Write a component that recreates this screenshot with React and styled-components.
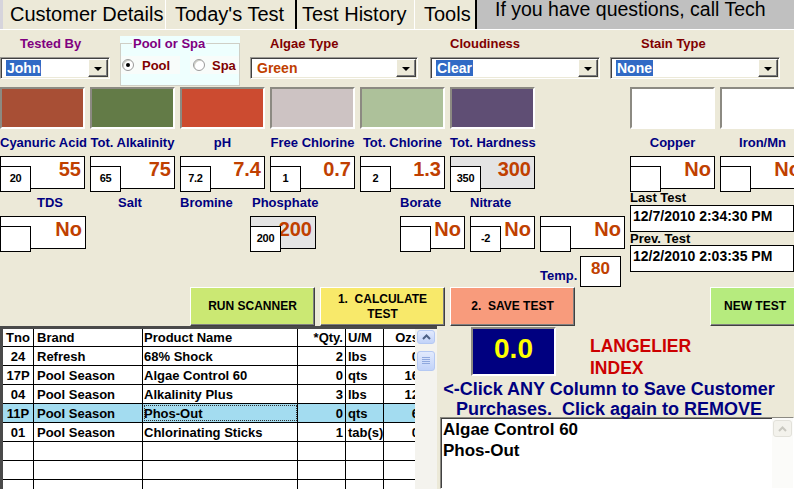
import React from "react";
import styled, { createGlobalStyle } from "styled-components";

const GlobalStyle = createGlobalStyle`
  html, body {
    margin: 0;
    padding: 0;
    background: #ece9d8;
  }
  body {
    font-family: "Liberation Sans", Arial, sans-serif;
  }
`;

const Screen = styled.div`
  width: 794px;
  height: 489px;
  overflow: hidden;
  background: #ece9d8;
  font-family: "Liberation Sans", Arial, sans-serif;
  color: #000;
`;

/* ---------- tabs ---------- */
const TabBar = styled.div`
  display: flex;
  height: 30px;
  box-sizing: border-box;
  border-bottom: 1px solid #fff;
  padding-left: 3px;
  background: #d6d4dc;
`;
const Tab = styled.div`
  flex: none;
  width: ${(p) => p.$w}px;
  box-sizing: border-box;
  padding-left: ${(p) => p.$pl}px;
  font-size: 20px;
  line-height: 29px;
  background: #ece9d8;
  white-space: nowrap;
  border-right: ${(p) => (p.$dark ? "2px solid #000" : "1px solid #fff")};
`;
const InfoPanel = styled.div`
  flex: 1;
  background: #c0c0c0;
  font-size: 19.5px;
  line-height: 18px;
  padding-left: 18px;
  white-space: nowrap;
`;

/* ---------- top row ---------- */
const TopRow = styled.div`
  display: flex;
  align-items: flex-start;
  height: 57px;
`;
const Field = styled.div`
  flex: none;
  width: ${(p) => p.$w}px;
  margin-left: ${(p) => p.$ml || 0}px;
  margin-top: 6px;
  display: flex;
  flex-direction: column;
  gap: 5px;
`;
const Label = styled.div`
  font-size: 13px;
  font-weight: bold;
  line-height: 16px;
  height: 16px;
  color: ${(p) => p.$c || "#000080"};
  text-align: ${(p) => p.$align || "center"};
  padding-left: ${(p) => p.$pl || 0}px;
  white-space: nowrap;
`;
const Combo = styled.div`
  display: flex;
  align-items: center;
  height: 22px;
  box-sizing: border-box;
  background: #fff;
  border: 1px solid;
  border-color: #9c9a94 #fff #fff #9c9a94;
  box-shadow: inset 1px 1px #404040, inset -1px -1px #ece9d8;
  padding: 1px 1px 1px 5px;
`;
const ComboText = styled.span`
  font-size: 14px;
  font-weight: bold;
  line-height: 16px;
  padding: 0 1px;
  color: ${(p) => (p.$sel ? "#fff" : "#c04000")};
  background: ${(p) => (p.$sel ? "#316ac5" : "transparent")};
`;
const ComboButton = styled.div`
  margin-left: auto;
  width: 20px;
  height: 18px;
  box-sizing: border-box;
  background: #ece9d8;
  border: 1px solid;
  border-color: #fff #404040 #404040 #fff;
  box-shadow: inset -1px -1px #808080;
  display: flex;
  align-items: center;
  justify-content: center;
  &::after {
    content: "";
    border-top: 4px solid #000;
    border-left: 4px solid transparent;
    border-right: 4px solid transparent;
    margin-top: 1px;
  }
`;

const GroupBox = styled.div`
  flex: none;
  width: 120px;
  height: 50px;
  margin: 6px 0 0 10px;
  padding-top: 7px;
  box-sizing: border-box;
  background: #eefffe;
`;
const GroupFrame = styled.div`
  position: relative;
  height: 43px;
  box-sizing: border-box;
  border: 1px solid #cfcfc6;
  padding-top: 12px;
  display: flex;
  gap: 10px;
`;
const Legend = styled.div`
  position: absolute;
  top: -8px;
  left: 11px;
  padding: 0 1px;
  background: #eefffe;
  font-size: 13px;
  font-weight: bold;
  line-height: 16px;
  color: #800080;
`;
const RadioItem = styled.div`
  flex: none;
  width: ${(p) => p.$w}px;
  height: 18px;
  display: flex;
  align-items: center;
  gap: ${(p) => p.$gap}px;
  padding-left: ${(p) => p.$pl}px;
  box-sizing: border-box;
  background: #f8fcfa;
  font-size: 13px;
  font-weight: bold;
  color: #800000;
`;
const RadioDot = styled.span`
  width: 12px;
  height: 12px;
  box-sizing: border-box;
  border-radius: 50%;
  border: 1px solid #9a9a9a;
  background: #fff;
  box-shadow: inset 1px 1px #d0d0c8;
  display: flex;
  align-items: center;
  justify-content: center;
  &::after {
    content: "";
    width: 4px;
    height: 4px;
    border-radius: 50%;
    background: ${(p) => (p.$on ? "#000" : "transparent")};
  }
`;

/* ---------- swatches and first value row ---------- */
const Grid9 = styled.div`
  display: grid;
  grid-template-columns: repeat(9, 85px);
  column-gap: 5px;
  margin-top: ${(p) => p.$mt || 0}px;
`;
const Swatch = styled.div`
  height: 42px;
  box-sizing: border-box;
  background: ${(p) => p.$c};
  border: 2px solid;
  border-color: #8c8a82 #fff #fff #8c8a82;
`;
const ValueBox = styled.div`
  position: relative;
  height: 33px;
  box-sizing: border-box;
  border: 1px solid #000;
  background: ${(p) => (p.$gray ? "#e4e4e4" : "#fff")};
  text-align: right;
  padding: 1px 3px 0 0;
  font-size: 20px;
  font-weight: bold;
  line-height: 22px;
  color: #c04000;
`;
const InnerBox = styled.div`
  position: absolute;
  left: -1px;
  top: 9px;
  width: 31px;
  height: 26px;
  box-sizing: border-box;
  border: 1px solid #000;
  background: #fff;
  font-size: 11px;
  font-weight: bold;
  letter-spacing: -0.3px;
  color: #000;
  display: flex;
  align-items: center;
  justify-content: center;
  padding-bottom: 3px;
  line-height: 12px;
`;

/* ---------- middle section ---------- */
const MidSection = styled.div`
  display: flex;
  height: 98px;
`;
const MidLeft = styled.div`
  flex: none;
  width: 630px;
`;
const ColRow = styled.div`
  display: flex;
  align-items: flex-start;
  height: 60px;
  padding-top: 6px;
  box-sizing: border-box;
`;
const Col = styled.div`
  flex: none;
  width: ${(p) => p.$w}px;
  margin-left: ${(p) => p.$ml || 0}px;
  display: flex;
  flex-direction: column;
  gap: 5px;
`;
const TempRow = styled.div`
  display: flex;
  align-items: flex-end;
  margin-top: 7px;
  padding-left: 540px;
`;
const TempLabel = styled.div`
  width: 40px;
  font-size: 13px;
  font-weight: bold;
  line-height: 16px;
  color: #000080;
  margin-bottom: 3px;
`;
const TempBox = styled.div`
  width: 41px;
  height: 31px;
  box-sizing: border-box;
  border: 1px solid #000;
  background: #fff;
  text-align: center;
  padding-top: 2px;
  font-size: 17px;
  font-weight: bold;
  line-height: 20px;
  color: #c04000;
`;
const MidRight = styled.div`
  flex: none;
  width: 164px;
`;
const DateLabel = styled.div`
  font-size: 13px;
  font-weight: bold;
  line-height: ${(p) => p.$lh}px;
  margin-top: ${(p) => p.$mt || 0}px;
  white-space: nowrap;
`;
const DateField = styled.div`
  height: 27px;
  box-sizing: border-box;
  border: 1px solid #000;
  background: #fff;
  padding-left: 2px;
  font-size: 14px;
  font-weight: bold;
  line-height: 21px;
  white-space: nowrap;
`;

/* ---------- buttons ---------- */
const ButtonRow = styled.div`
  display: flex;
  gap: 5px;
  height: 39px;
  padding-left: 190px;
`;
const ActionButton = styled.div`
  flex: none;
  width: ${(p) => p.$w || 125}px;
  height: 39px;
  margin-left: ${(p) => p.$ml || 0}px;
  box-sizing: border-box;
  background: ${(p) => p.$bg};
  border: 1px solid;
  border-color: #fff #404040 #404040 #fff;
  box-shadow: inset -1px -1px #808080;
  display: flex;
  align-items: center;
  justify-content: center;
  text-align: center;
  font-size: 12px;
  font-weight: bold;
  line-height: 15px;
  white-space: pre;
`;

/* ---------- bottom ---------- */
const Bottom = styled.div`
  display: flex;
  height: 163px;
`;
const TableFrame = styled.div`
  flex: none;
  width: 437px;
  height: 163px;
  box-sizing: border-box;
  display: flex;
  background: #fff;
  border-top: 3px solid #4a4a4a;
  border-left: 3px solid #4a4a4a;
`;
const TableBody = styled.div`
  flex: none;
  width: 412px;
  overflow: hidden;
`;
const Row = styled.div`
  display: flex;
  height: ${(p) => (p.$head ? 18 : 19)}px;
  box-sizing: border-box;
  border-bottom: 1px solid #000;
  background: ${(p) => (p.$sel ? "#a3dcf0" : "#fff")};
`;
const Cell = styled.div`
  flex: none;
  width: ${(p) => p.$w}px;
  box-sizing: border-box;
  border-right: ${(p) => (p.$last ? "none" : "1px solid #000")};
  text-align: ${(p) => p.$align};
  padding: 0 ${(p) => p.$pr}px 0 ${(p) => p.$pl}px;
  font-size: 13px;
  font-weight: bold;
  line-height: ${(p) => (p.$head ? 17 : 19)}px;
  white-space: nowrap;
  overflow: hidden;
  outline: ${(p) => (p.$focus ? "1px dotted #333" : "none")};
  outline-offset: -2px;
`;
const VScroll = styled.div`
  flex: 1;
  background: #f4f3ee;
  display: flex;
  flex-direction: column;
  align-items: center;
  gap: 7px;
  padding-top: 1px;
`;
const ScrollBtn = styled.div`
  width: 18px;
  height: ${(p) => p.$h}px;
  box-sizing: border-box;
  border: 1px solid #b5c9f3;
  border-radius: 3px;
  background: linear-gradient(#e2eafd, #c2d3f9);
  display: flex;
  align-items: center;
  justify-content: center;
`;

const RightPanel = styled.div`
  flex: none;
  width: 357px;
`;
const LangRow = styled.div`
  display: flex;
  align-items: flex-start;
  height: 51px;
`;
const LangBox = styled.div`
  flex: none;
  width: 85px;
  height: 49px;
  margin: 1px 0 0 34px;
  box-sizing: border-box;
  background: #000080;
  border: 2px solid;
  border-color: #8c8a82 #fff #fff #8c8a82;
  display: flex;
  align-items: center;
  justify-content: center;
  padding-bottom: 5px;
  color: #ffff00;
  font-size: 28px;
  font-weight: bold;
`;
const LangText = styled.div`
  margin: 9px 0 0 34px;
  color: #cc0000;
  font-size: 17.5px;
  font-weight: bold;
  line-height: 22px;
`;
const ClickText = styled.div`
  width: 342px;
  height: 38px;
  margin: 2px 0 0 1px;
  color: #000080;
  font-size: 18px;
  font-weight: bold;
  line-height: 20px;
  text-align: center;
  white-space: pre;
`;
const PurchaseBox = styled.div`
  display: flex;
  margin-left: 3px;
  width: 354px;
  height: 72px;
  box-sizing: border-box;
  background: #fff;
  border: 1px solid;
  border-color: #8c8a82 #fff #fff #8c8a82;
  box-shadow: inset 1px 1px #404040;
`;
const PurchaseList = styled.div`
  flex: 1;
  padding: 1px 0 0 2px;
  font-size: 17px;
  font-weight: bold;
  line-height: 21px;
`;
const ListScroll = styled.div`
  flex: none;
  width: 21px;
  background: #fbfbf9;
  padding-top: 2px;
  display: flex;
  justify-content: center;
`;
const DisabledBtn = styled.div`
  width: 19px;
  height: 17px;
  box-sizing: border-box;
  border: 1px solid #e2e1da;
  border-radius: 3px;
  background: #f3f2ec;
  display: flex;
  align-items: center;
  justify-content: center;
`;

const UpChevron = ({ color }) => (
  <svg width="9" height="6" viewBox="0 0 9 6">
    <path d="M1 5 L4.5 1.5 L8 5" fill="none" stroke={color} strokeWidth="2" />
  </svg>
);

const Grip = () => (
  <svg width="8" height="8" viewBox="0 0 8 8">
    {[0, 2, 4, 6].map((y) => (
      <line key={y} x1="0" y1={y + 0.5} x2="8" y2={y + 0.5} stroke="#8fa8de" strokeWidth="1" />
    ))}
  </svg>
);

const swatches = ["#a84f35", "#637b47", "#cc4b30", "#cdc3c3", "#adc19a", "#5f4e74"];

const tests = [
  { label: "Cyanuric Acid", small: "20", big: "55" },
  { label: "Tot. Alkalinity", small: "65", big: "75" },
  { label: "pH", small: "7.2", big: "7.4" },
  { label: "Free Chlorine", small: "1", big: "0.7" },
  { label: "Tot. Chlorine", small: "2", big: "1.3" },
  { label: "Tot. Hardness", small: "350", big: "300", gray: true },
  null,
  { label: "Copper", small: "", big: "No" },
  { label: "Iron/Mn", small: "", big: "No" },
];

const cols = [
  { w: 31, align: "center", pl: 0, pr: 0 },
  { w: 109, align: "left", pl: 3, pr: 0 },
  { w: 155, align: "left", pl: 1, pr: 0 },
  { w: 48, align: "right", pl: 0, pr: 2 },
  { w: 38, align: "left", pl: 2, pr: 0 },
  { w: 36, align: "right", pl: 0, pr: 1, last: true },
];

const header = ["Tno", "Brand", "Product Name", "*Qty.", "U/M", "Ozs"];
const products = [
  ["24", "Refresh", "68% Shock", "2", "lbs", "0"],
  ["17P", "Pool Season", "Algae Control 60", "0", "qts", "16"],
  ["04", "Pool Season", "Alkalinity Plus", "3", "lbs", "12"],
  ["11P", "Pool Season", "Phos-Out", "0", "qts", "6"],
  ["01", "Pool Season", "Chlorinating Sticks", "1", "tab(s)", "0"],
  ["", "", "", "", "", ""],
  ["", "", "", "", "", ""],
  ["", "", "", "", "", ""],
];

function Dropdown({ text, sel }) {
  return (
    <Combo>
      <ComboText $sel={sel}>{text}</ComboText>
      <ComboButton />
    </Combo>
  );
}

function Reading({ small, big, gray }) {
  return (
    <ValueBox $gray={gray}>
      {big}
      <InnerBox>{small}</InnerBox>
    </ValueBox>
  );
}

export default function App() {
  return (
    <Screen>
      <GlobalStyle />
      <TabBar>
        <Tab $w={163} $pl={7}>Customer Details</Tab>
        <Tab $w={131} $pl={9} $dark>Today's Test</Tab>
        <Tab $w={118} $pl={5}>Test History</Tab>
        <Tab $w={62} $pl={9} $dark>Tools</Tab>
        <InfoPanel>If you have questions, call Tech</InfoPanel>
      </TabBar>

      <TopRow>
        <Field $w={110}>
          <Label $c="#800080" $align="left" $pl={20}>Tested By</Label>
          <Dropdown text="John" sel />
        </Field>
        <GroupBox>
          <GroupFrame>
            <Legend>Pool or Spa</Legend>
            <RadioItem $w={59} $pl={1} $gap={8}>
              <RadioDot $on />
              Pool
            </RadioItem>
            <RadioItem $w={49} $pl={3} $gap={7}>
              <RadioDot />
              Spa
            </RadioItem>
          </GroupFrame>
        </GroupBox>
        <Field $w={168} $ml={10}>
          <Label $c="#800000" $align="left" $pl={20}>Algae Type</Label>
          <Dropdown text="Green" />
        </Field>
        <Field $w={170} $ml={12}>
          <Label $c="#800000" $align="left" $pl={20}>Cloudiness</Label>
          <Dropdown text="Clear" sel />
        </Field>
        <Field $w={170} $ml={10}>
          <Label $c="#800000" $align="left" $pl={31}>Stain Type</Label>
          <Dropdown text="None" sel />
        </Field>
      </TopRow>

      <Grid9>
        {swatches.map((c) => (
          <Swatch key={c} $c={c} />
        ))}
        <div />
        <Swatch $c="#fff" />
        <Swatch $c="#fff" />
      </Grid9>
      <Grid9 $mt={6}>
        {tests.map((t, i) => (
          <Label key={i}>{t ? t.label : ""}</Label>
        ))}
      </Grid9>
      <Grid9 $mt={5}>
        {tests.map((t, i) => (t ? <Reading key={i} {...t} /> : <div key={i} />))}
      </Grid9>

      <MidSection>
        <MidLeft>
          <ColRow>
            <Col $w={86}>
              <Label $align="left" $pl={37}>TDS</Label>
              <Reading small="" big="No" />
            </Col>
            <Col $w={85} $ml={4}>
              <Label $align="left" $pl={28}>Salt</Label>
            </Col>
            <Col $w={65} $ml={5}>
              <Label $align="left">Bromine</Label>
            </Col>
            <Col $w={66} $ml={5}>
              <Label $align="left" $pl={2}>Phosphate</Label>
              <Reading small="200" big="200" gray />
            </Col>
            <Col $w={65} $ml={84}>
              <Label $align="left">Borate</Label>
              <Reading small="" big="No" />
            </Col>
            <Col $w={65} $ml={5}>
              <Label $align="left">Nitrate</Label>
              <Reading small="-2" big="No" />
            </Col>
            <Col $w={85} $ml={5}>
              <Label />
              <Reading small="" big="No" />
            </Col>
          </ColRow>
          <TempRow>
            <TempLabel>Temp.</TempLabel>
            <TempBox>80</TempBox>
          </TempRow>
        </MidLeft>
        <MidRight>
          <DateLabel $lh={15} $mt={1}>Last Test</DateLabel>
          <DateField>12/7/2010 2:34:30 PM</DateField>
          <DateLabel $lh={13}>Prev. Test</DateLabel>
          <DateField>12/2/2010 2:03:35 PM</DateField>
        </MidRight>
      </MidSection>

      <ButtonRow>
        <ActionButton $bg="#cbe873">RUN SCANNER</ActionButton>
        <ActionButton $bg="#f8e96a">{"1.  CALCULATE\nTEST"}</ActionButton>
        <ActionButton $bg="#f89b7c">{"2.  SAVE TEST"}</ActionButton>
        <ActionButton $bg="#b6eb7e" $w={90} $ml={130}>NEW TEST</ActionButton>
      </ButtonRow>

      <Bottom>
        <TableFrame>
          <TableBody>
            <Row $head>
              {header.map((h, i) => (
                <Cell key={i} $head $w={cols[i].w} $align={cols[i].align} $pl={cols[i].pl} $pr={cols[i].pr} $last={cols[i].last}>
                  {h}
                </Cell>
              ))}
            </Row>
            {products.map((r, ri) => (
              <Row key={ri} $sel={ri === 3}>
                {r.map((v, i) => (
                  <Cell
                    key={i}
                    $w={cols[i].w}
                    $align={cols[i].align}
                    $pl={cols[i].pl}
                    $pr={cols[i].pr}
                    $last={cols[i].last}
                    $focus={ri === 3 && i === 2}
                  >
                    {v}
                  </Cell>
                ))}
              </Row>
            ))}
          </TableBody>
          <VScroll>
            <ScrollBtn $h={14}>
              <UpChevron color="#4d6185" />
            </ScrollBtn>
            <ScrollBtn $h={20}>
              <Grip />
            </ScrollBtn>
          </VScroll>
        </TableFrame>

        <RightPanel>
          <LangRow>
            <LangBox>0.0</LangBox>
            <LangText>
              LANGELIER
              <br />
              INDEX
            </LangText>
          </LangRow>
          <ClickText>
            {"<-Click ANY Column to Save Customer\nPurchases.  Click again to REMOVE"}
          </ClickText>
          <PurchaseBox>
            <PurchaseList>
              Algae Control 60
              <br />
              Phos-Out
            </PurchaseList>
            <ListScroll>
              <DisabledBtn>
                <UpChevron color="#c9c8c0" />
              </DisabledBtn>
            </ListScroll>
          </PurchaseBox>
        </RightPanel>
      </Bottom>
    </Screen>
  );
}
